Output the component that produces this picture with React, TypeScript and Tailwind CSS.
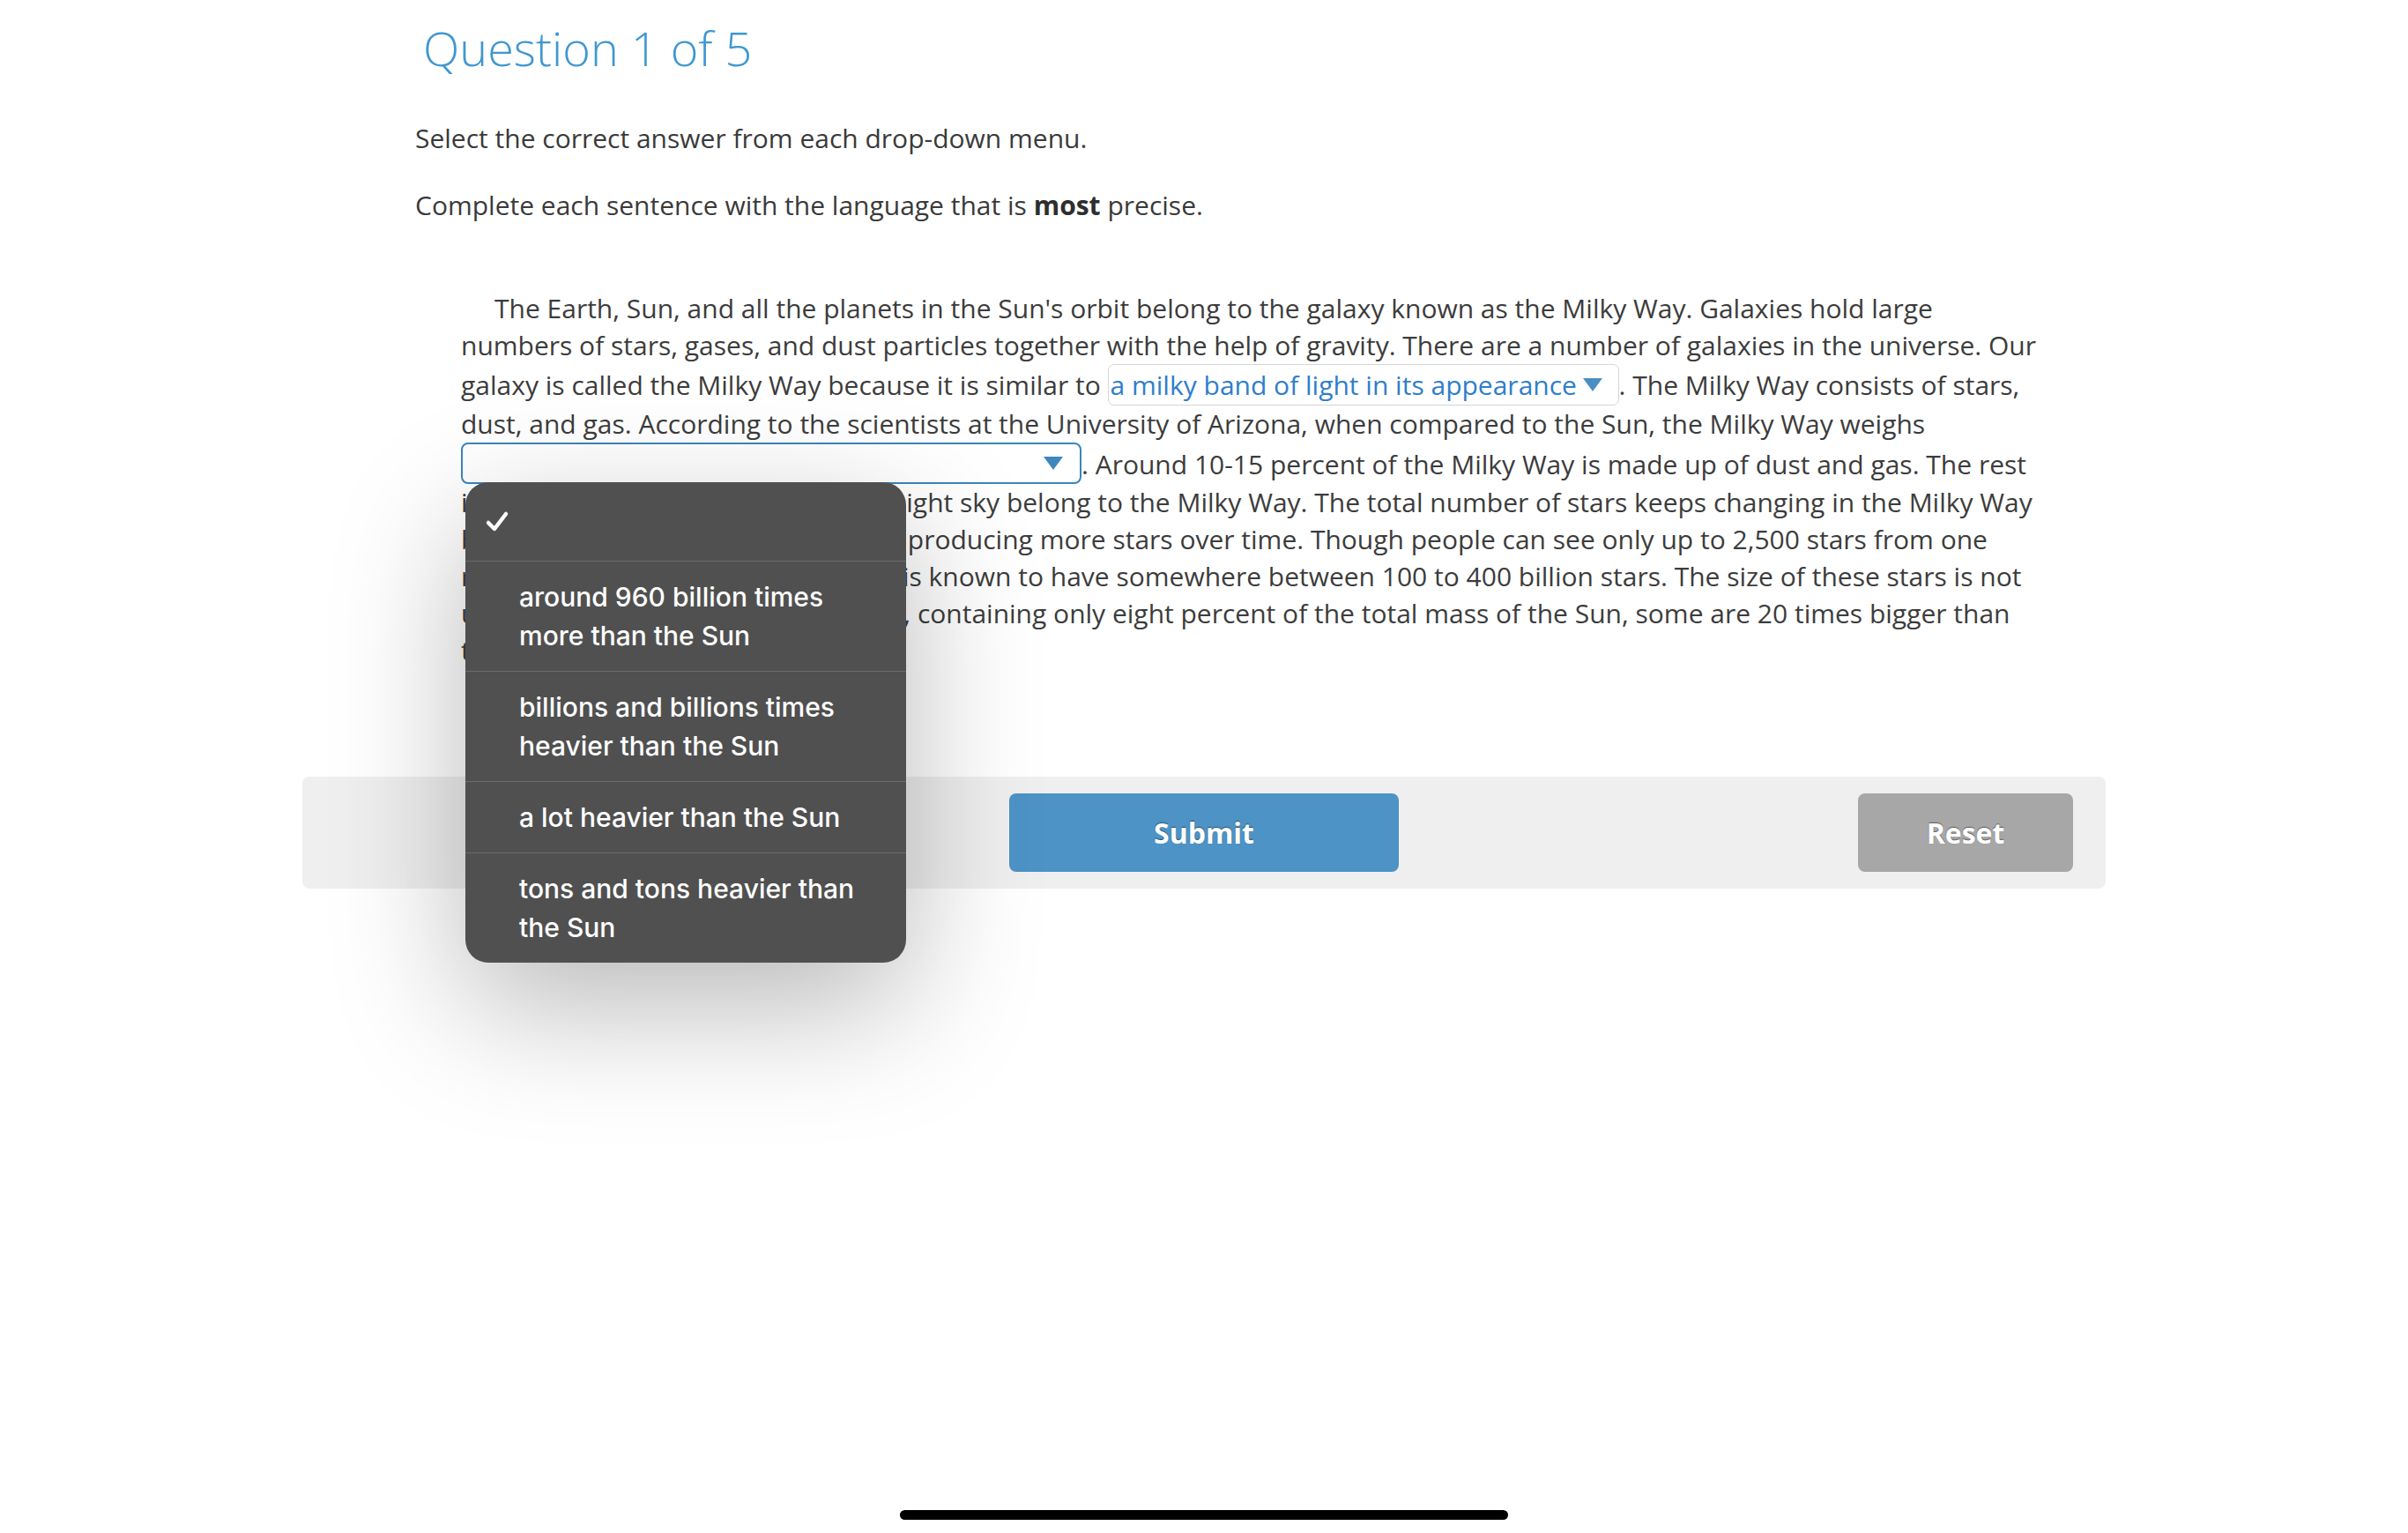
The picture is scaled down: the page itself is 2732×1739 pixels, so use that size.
const OPTIONS = [
  ['around 960 billion times', 'more than the Sun'],
  ['billions and billions times', 'heavier than the Sun'],
  ['a lot heavier than the Sun'],
  ['tons and tons heavier than', 'the Sun'],
];

function Arrow({ className }: { className?: string }) {
  return (
    <svg className={className} width="22" height="15" viewBox="0 0 22 15">
      <polygon points="0,0 22,0 11,15" fill="currentColor" />
    </svg>
  );
}

function OptionMenu() {
  return (
    <div className="absolute left-[5px] top-[41px] z-20 w-[500px] rounded-[26px] bg-[#505050] indent-0 shadow-[0_50px_150px_rgba(0,0,0,0.28)] font-['Inter','Roboto',sans-serif] text-[30px] font-medium leading-[44px] text-white">
      <div className="flex h-[89px] items-center pl-[22px]">
        <svg width="28" height="26" viewBox="0 0 28 26" fill="none" stroke="white" strokeWidth="4.5" strokeLinecap="round" strokeLinejoin="round">
          <polyline points="4,14 11,21 24,4" />
        </svg>
      </div>
      {OPTIONS.map((lines, i) => (
        <div key={i} className="border-t border-[#6b6b6b] py-[18px] pl-[61px] pr-6">
          {lines.map((l) => (
            <div key={l}>{l}</div>
          ))}
        </div>
      ))}
    </div>
  );
}

export default function App() {
  return (
    <div className="flex min-h-[1739px] flex-col bg-white font-['Open_Sans','Liberation_Sans',sans-serif] text-[#3a3a3a]">
      <div className="mx-auto w-[2046px]">
        {/* Header */}
        <h1 className="pl-[137px] pt-[23px] text-[54px] font-light leading-[62px] text-[#3f97d0]">
          Question 1 of 5
        </h1>

        <p className="mt-[50px] pl-[128px] text-[30px] leading-[44px]">
          Select the correct answer from each drop-down menu.
        </p>
        <p className="mt-[32px] pl-[128px] text-[30px] leading-[44px]">
          Complete each sentence with the language that is <b className="font-bold text-[#2e2e2e]">most</b> precise.
        </p>

        {/* Passage */}
        <p className="mt-[74px] pl-[180px] pr-[71px] indent-[38px] text-[30px] leading-[42px] text-[#3c3c3c]">
          The Earth, Sun, and all the planets in the Sun's orbit belong to the galaxy known as the Milky Way. Galaxies hold
          large numbers of stars, gases, and dust particles together with the help of gravity. There are a number of
          galaxies in the universe. Our galaxy is called the Milky Way because it is similar to{' '}
          <span className="inline-flex h-[47px] w-[580px] items-center justify-between rounded-[7px] border border-[#d6d6d6] pl-[2px] pr-[18px] align-baseline indent-0 text-[#2f7ecb]">
            <span>a milky band of light in its appearance</span>
            <Arrow className="text-[#4a8fc4]" />
          </span>
          . The Milky Way consists of stars, dust, and gas. According to the scientists at the University of Arizona, when
          compared to the Sun, the Milky Way weighs{' '}
          <span className="relative">
            <span className="inline-block overflow-hidden rounded-[8px] border-2 border-[#3a86bb] align-[-11px] indent-0">
              <span className="flex h-[43px] w-[700px] items-center justify-end pr-[19px]">
                <Arrow className="text-[#3e86bd]" />
              </span>
            </span>
            <OptionMenu />
          </span>
          . Around 10-15 percent of the Milky Way is made up of dust and gas. The rest is made up of stars. All stars in the
          night sky belong to the Milky Way. The total number of stars keeps changing in the Milky Way because the Milky
          Way is constantly producing more stars over time. Though people can see only up to 2,500 stars from one region
          on the planet, the Milky Way is known to have somewhere between 100 to 400 billion stars. The size of these stars
          is not uniform. While some stars are small, containing only eight percent of the total mass of the Sun, some are
          20 times bigger than the Sun.
        </p>

        {/* Actions */}
        <div className="mt-[122px] grid h-[127px] grid-cols-[1fr_auto_1fr] items-center rounded-[8px] bg-[#efefef] px-[37px]">
          <div />
          <button className="h-[89px] w-[442px] rounded-[8px] bg-[#4d93c5] text-[32px] font-bold text-white [text-shadow:0_-1px_1px_rgba(0,0,0,0.45)]">
            Submit
          </button>
          <button className="h-[89px] w-[244px] justify-self-end rounded-[8px] bg-[#a7a7a7] text-[32px] font-bold text-white [text-shadow:0_-1px_1px_rgba(0,0,0,0.45)]">
            Reset
          </button>
        </div>
      </div>

      {/* Home indicator */}
      <div className="mx-auto mb-[15px] mt-auto h-[11px] w-[690px] rounded-full bg-black" />
    </div>
  );
}
